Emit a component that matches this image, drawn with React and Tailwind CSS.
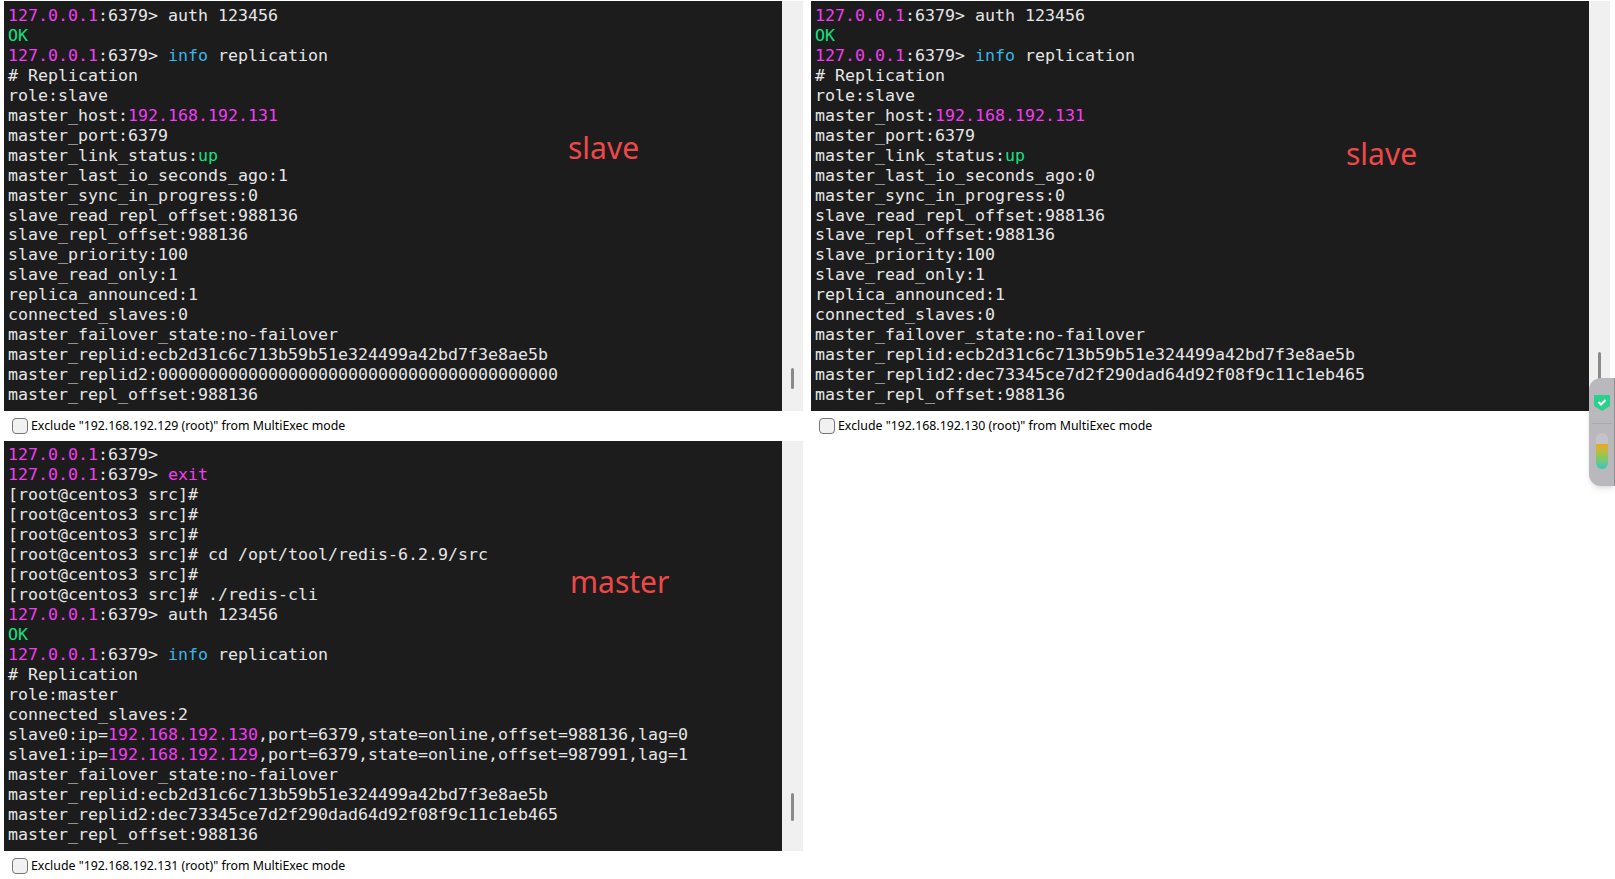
const Ip = ({ children }) => <span className="text-[#f23cf0]">{children}</span>;
const Cmd = ({ children }) => <span className="text-[#38b6e4]">{children}</span>;
const Ok = ({ children }) => <span className="text-[#16e07f]">{children}</span>;
const Prompt = () => <><Ip>127.0.0.1</Ip>:6379&gt; </>;

const slaveTop = (ago, replid2) => (
  <>
    <Prompt />auth 123456{'\n'}
    <Ok>OK</Ok>{'\n'}
    <Prompt /><Cmd>info</Cmd> replication{'\n'}
    # Replication{'\n'}
    role:slave{'\n'}
    master_host:<Ip>192.168.192.131</Ip>{'\n'}
    master_port:6379{'\n'}
    master_link_status:<Ok>up</Ok>{'\n'}
    master_last_io_seconds_ago:{ago}{'\n'}
    master_sync_in_progress:0{'\n'}
    slave_read_repl_offset:988136{'\n'}
    slave_repl_offset:988136{'\n'}
    slave_priority:100{'\n'}
    slave_read_only:1{'\n'}
    replica_announced:1{'\n'}
    connected_slaves:0{'\n'}
    master_failover_state:no-failover{'\n'}
    master_replid:ecb2d31c6c713b59b51e324499a42bd7f3e8ae5b{'\n'}
    master_replid2:{replid2}{'\n'}
    master_repl_offset:988136
  </>
);

const masterLog = (
  <>
    <Prompt />{'\n'}
    <Prompt /><Ip>exit</Ip>{'\n'}
    [root@centos3 src]#{'\n'}
    [root@centos3 src]#{'\n'}
    [root@centos3 src]#{'\n'}
    [root@centos3 src]# cd /opt/tool/redis-6.2.9/src{'\n'}
    [root@centos3 src]#{'\n'}
    [root@centos3 src]# ./redis-cli{'\n'}
    <Prompt />auth 123456{'\n'}
    <Ok>OK</Ok>{'\n'}
    <Prompt /><Cmd>info</Cmd> replication{'\n'}
    # Replication{'\n'}
    role:master{'\n'}
    connected_slaves:2{'\n'}
    slave0:ip=<Ip>192.168.192.130</Ip>,port=6379,state=online,offset=988136,lag=0{'\n'}
    slave1:ip=<Ip>192.168.192.129</Ip>,port=6379,state=online,offset=987991,lag=1{'\n'}
    master_failover_state:no-failover{'\n'}
    master_replid:ecb2d31c6c713b59b51e324499a42bd7f3e8ae5b{'\n'}
    master_replid2:dec73345ce7d2f290dad64d92f08f9c11c1eb465{'\n'}
    master_repl_offset:988136
  </>
);

function Terminal({ host, tag, tagClass, thumbClass, lineClass, children }) {
  return (
    <div className="w-[799px]">
      <div className="relative flex h-[410px]">
        <pre className={`w-[778px] overflow-hidden bg-[#1c1c1c] pl-1 font-['DejaVu_Sans_Mono',monospace] text-[16.63px] text-[#e6e6e6] ${lineClass}`}>
          {children}
        </pre>
        <div className="flex w-[21px] flex-col justify-end bg-[#f0f0f0]">
          <div className={thumbClass} />
        </div>
        <span className={tagClass}>{tag}</span>
      </div>
      <div className="flex h-[30px] items-center pl-2">
        <span className="h-4 w-4 rounded-[4px] border border-[#767676] bg-[#f1f1f1]" />
        <span className="ml-[3px] font-['Noto_Sans',sans-serif] text-[12.35px] text-black">
          Exclude "{host} (root)" from MultiExec mode
        </span>
      </div>
    </div>
  );
}

const tag = "absolute font-['Noto_Sans',sans-serif] text-[30px] text-[#ee4848] leading-none";

export default function App() {
  return (
    <div className="relative h-[879px] w-[1615px] overflow-hidden bg-white pt-px pl-1">
      <div className="flex gap-2">
        <Terminal
          host="192.168.192.129"
          tag="slave"
          lineClass="pt-[5px] leading-[19.95px]"
          thumbClass="mb-[22px] ml-[9px] h-[21px] w-[3px] rounded-full bg-[#8a8a8a]"
          tagClass={`${tag} left-[564px] top-[132px]`}
        >
          {slaveTop(1, '0000000000000000000000000000000000000000')}
        </Terminal>
        <Terminal
          host="192.168.192.130"
          tag="slave"
          lineClass="pt-[5px] leading-[19.95px]"
          thumbClass="mb-[30px] ml-[9px] h-[29px] w-[3px] rounded-full bg-[#8a8a8a]"
          tagClass={`${tag} left-[535px] top-[138px]`}
        >
          {slaveTop(0, 'dec73345ce7d2f290dad64d92f08f9c11c1eb465')}
        </Terminal>
      </div>
      <Terminal
        host="192.168.192.131"
        tag="master"
        lineClass="pt-[4px] leading-[20px]"
        thumbClass="mb-[30px] ml-[9px] h-[28px] w-[3px] rounded-full bg-[#8a8a8a]"
        tagClass={`${tag} left-[566px] top-[126px]`}
      >
        {masterLog}
      </Terminal>

      {/* floating browser widget docked on the right edge */}
      <div className="absolute right-0 top-[378px] flex h-[108px] w-[26px] flex-col items-center rounded-l-[12px] border-r border-[#8f8f93] bg-[#b9b9bd] pt-4 shadow-md">
        <svg width="16" height="18" viewBox="0 0 16 18">
          <path d="M0 1h16v11l-8 5-8-5z" fill="#2bd08c" />
          <path d="M4.5 8l2.5 2.5 4.5-4.5" fill="none" stroke="#fff" strokeWidth="2" />
        </svg>
        <div className="mt-[11px] h-px w-5 bg-[#a9a9ad]" />
        <div className="mt-[9px] flex h-9 w-3 flex-col justify-end overflow-hidden rounded-full bg-[#c4c4c8]">
          <div className="h-[25px] bg-gradient-to-b from-[#eea51c] via-[#8cc850] to-[#2cc4c0]" />
        </div>
      </div>
    </div>
  );
}
